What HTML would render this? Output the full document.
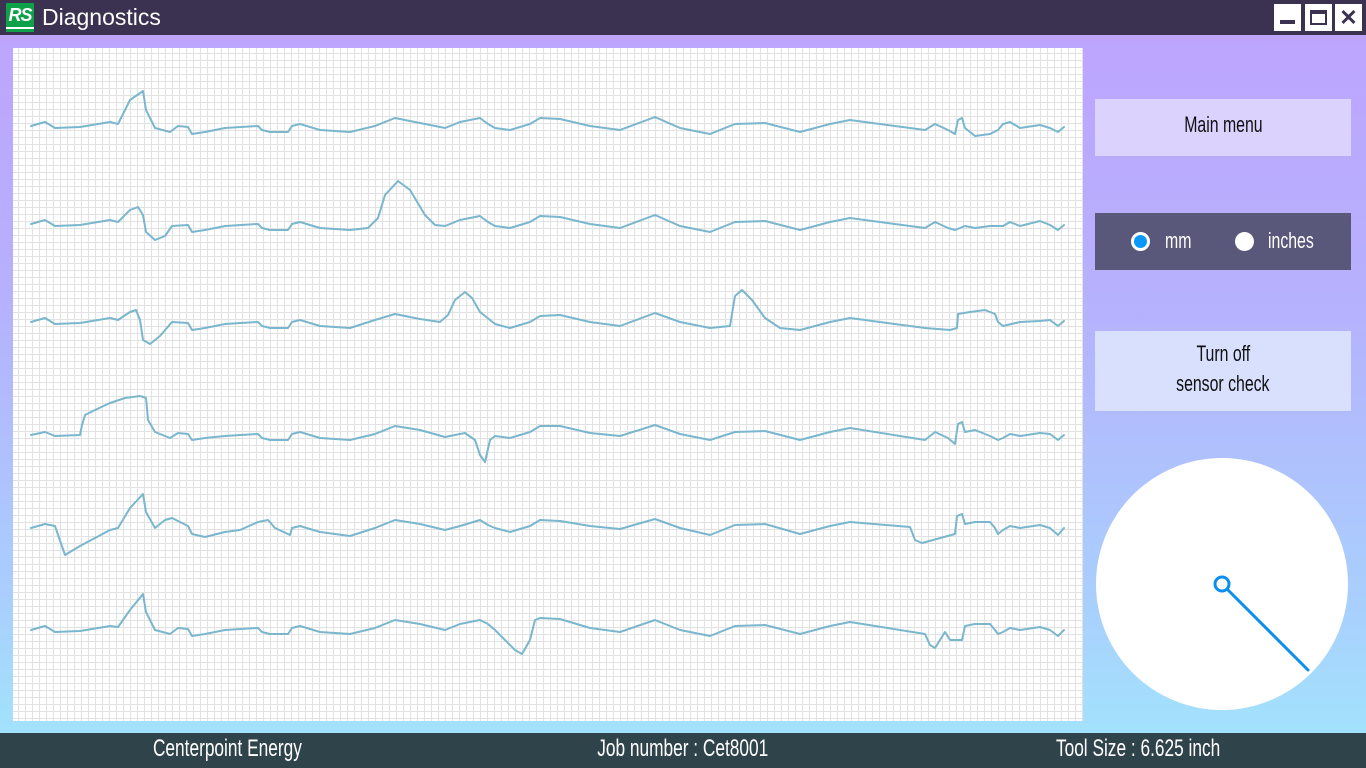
<!DOCTYPE html>
<html><head><meta charset="utf-8"><style>
*{margin:0;padding:0;box-sizing:border-box}
body{width:1366px;height:768px;overflow:hidden;position:relative;font-family:"Liberation Sans",sans-serif;background:linear-gradient(#bda5fe 35px,#b6b1fd 300px,#a9cffd 600px,#a3e2fd 733px)}
.title{position:absolute;left:0;top:0;width:1366px;height:35px;background:#3a3250}
.logo{position:absolute;left:6px;top:3px;width:28px;height:29px;background:#0fa14a;color:#fff;font-weight:bold;font-style:italic;font-size:18px;line-height:24px;text-align:center;letter-spacing:-1px}
.logo:after{content:"";position:absolute;left:0;right:0;bottom:3px;height:2px;background:#fff}
.ttl{position:absolute;left:42px;top:4px;color:#fff;font-size:23px}
.wb{position:absolute;top:4px;width:27px;height:27px;background:#fff}
.chart{position:absolute;left:13px;top:48px;width:1070px;height:673px;background-color:#fff;background-image:linear-gradient(90deg,#e2e2e2 1px,transparent 1px),linear-gradient(#e2e2e2 1px,transparent 1px);background-size:7px 7px;background-position:5px 5px}
.btn{position:absolute;left:1095px;width:256px;color:#111;text-align:center;font-size:22px}
.c{display:inline-block;transform:scaleX(.72);white-space:nowrap}
.l{transform-origin:left center}
.foot{position:absolute;left:0;top:733px;width:1366px;height:35px;background:#2f434a;color:#fff;font-size:24px}
.foot > div{position:absolute;top:2px;text-align:center}
</style></head><body>
<div class="title"><div class="logo">RS</div><div class="ttl">Diagnostics</div>
<div class="wb" style="left:1274px"><div style="position:absolute;left:6px;top:16px;width:15px;height:4px;background:#3a3250"></div></div>
<div class="wb" style="left:1305px"><div style="position:absolute;left:5px;top:6px;width:17px;height:15px;border:2px solid #3a3250;border-top-width:4px"></div></div>
<div class="wb" style="left:1335px;color:#3a3250;font-weight:bold;font-size:22px;line-height:27px;text-align:center">✕</div>
</div>
<div class="chart"></div>
<svg style="position:absolute;left:0;top:0" width="1366" height="768" fill="none" stroke="#7ab6cd" stroke-width="2" stroke-linejoin="round" stroke-linecap="round">
<defs><path id="b" d="M31,126 L45,122 55,128 80,127 110,122 118,124 130,100 143,91 146,110 155,128 170,132 178,126 188,127 192,134 205,132 225,128 258,126 262,130 270,132 288,132 292,126 300,124 320,130 350,132 375,126 395,118 420,123 445,128 460,122 480,118 488,124 495,128 510,130 530,124 540,118 560,119 590,126 620,130 655,117 680,128 710,134 735,124 765,123 800,132 815,128 830,124 850,120 925,130 935,124 948,130 955,134 958,120 962,118 965,128 975,136 990,134 998,130 1003,124 1010,122 1020,128 1040,125 1050,128 1058,132 1064,127"/></defs>
<use href="#b"/>
<path d="M31,224 L45,220 55,226 80,225 110,220 118,222 130,210 138,207 143,215 146,232 155,240 165,236 172,226 188,225 192,232 205,230 225,226 258,224 262,228 270,230 288,230 292,224 300,222 320,228 350,230 368,228 378,218 385,195 398,181 410,190 425,215 435,225 445,226 460,220 480,216 488,222 495,226 510,228 530,222 540,216 560,217 590,224 620,228 655,215 680,226 710,232 735,222 765,221 800,230 815,226 830,222 850,218 925,228 935,222 948,228 955,230 965,226 975,228 990,226 1003,226 1010,222 1020,226 1040,221 1050,225 1058,230 1064,225"/>
<path d="M31,322 L45,318 55,324 80,323 110,318 118,320 130,312 136,310 140,320 143,340 150,344 160,336 172,322 188,323 192,330 205,328 225,324 258,322 262,326 270,328 288,328 292,322 300,320 320,326 350,328 375,320 395,314 420,319 440,322 448,315 455,300 465,292 472,298 480,312 495,324 510,328 530,322 540,316 560,315 590,322 620,326 655,313 680,322 710,328 730,326 735,296 742,290 752,300 765,318 780,328 800,330 815,326 830,322 850,318 925,328 950,330 957,328 958,314 970,312 985,310 995,314 998,322 1003,326 1020,322 1040,321 1050,320 1058,326 1064,321"/>
<path d="M31,435 L45,432 55,436 80,435 82,425 85,415 95,410 110,403 125,398 140,396 146,398 148,420 155,432 170,438 178,433 188,434 192,440 205,438 225,436 258,434 262,438 270,440 288,440 292,434 300,432 320,438 350,440 375,434 395,426 420,430 445,437 460,434 465,433 475,440 480,455 485,462 490,440 495,436 510,438 530,432 540,426 560,426 590,433 620,436 655,425 680,434 710,440 735,432 765,431 800,440 815,436 830,432 850,428 925,440 935,432 948,438 955,444 958,424 962,422 965,432 975,430 990,436 998,440 1003,438 1010,434 1020,436 1040,433 1050,434 1058,440 1064,435"/>
<path d="M31,528 L45,524 55,526 65,555 80,546 110,530 118,528 130,508 143,494 146,512 155,528 165,520 172,518 188,526 192,534 205,537 225,532 240,530 258,522 268,520 275,528 290,535 292,528 300,526 320,532 350,536 375,528 395,520 420,524 445,530 460,526 480,520 488,525 495,528 510,532 530,526 540,520 560,521 590,526 620,529 655,519 680,528 710,535 735,525 765,524 800,534 815,530 830,526 850,522 910,527 915,540 922,543 955,534 957,516 962,514 965,524 975,522 990,522 995,528 998,534 1003,530 1010,526 1020,528 1040,525 1050,528 1058,535 1064,528"/>
<path d="M31,630 L45,626 55,632 80,631 110,626 118,627 130,610 143,594 146,612 155,630 170,634 178,628 188,629 192,636 205,634 225,630 258,628 262,632 270,634 288,634 292,628 300,626 320,632 350,634 375,628 395,620 420,624 445,630 460,624 480,620 488,624 495,630 505,640 515,650 522,654 530,640 535,620 540,618 560,619 590,628 620,632 655,620 680,630 710,636 735,626 765,625 800,634 815,630 830,626 850,622 925,634 930,645 935,648 945,632 950,640 962,640 965,626 975,624 990,624 995,630 998,634 1003,632 1010,628 1020,630 1040,627 1050,630 1058,636 1064,630"/>
<circle cx="1222" cy="584" r="126" fill="#fff" stroke="none"/>
<line x1="1226" y1="588" x2="1308" y2="670" stroke="#0a8ff0" stroke-width="3"/>
<circle cx="1222" cy="584" r="7" fill="#fff" stroke="#0a8ff0" stroke-width="3"/>
</svg>
<div class="btn" style="top:99px;height:57px;background:#dbd2fe;line-height:52px"><span class="c">Main menu</span></div>
<div class="btn" style="top:213px;height:57px;background:#5a587a;color:#fff">
<div style="position:absolute;left:36px;top:19px;width:19px;height:19px;border-radius:50%;background:#0a98fa;border:3px solid #fff"></div>
<div style="position:absolute;left:70px;top:15px"><span class="c l">mm</span></div>
<div style="position:absolute;left:140px;top:19px;width:19px;height:19px;border-radius:50%;background:#fff"></div>
<div style="position:absolute;left:173px;top:15px"><span class="c l">inches</span></div>
</div>
<div class="btn" style="top:331px;height:80px;background:#d8e0fe;line-height:30px;padding-top:8px"><span class="c">Turn off</span><br><span class="c">sensor check</span></div>
<div class="foot">
<div style="left:107px;width:240px"><span class="c">Centerpoint Energy</span></div>
<div style="left:563px;width:240px"><span class="c">Job number : Cet8001</span></div>
<div style="left:1018px;width:240px"><span class="c">Tool Size : 6.625 inch</span></div>
</div>
</body></html>
